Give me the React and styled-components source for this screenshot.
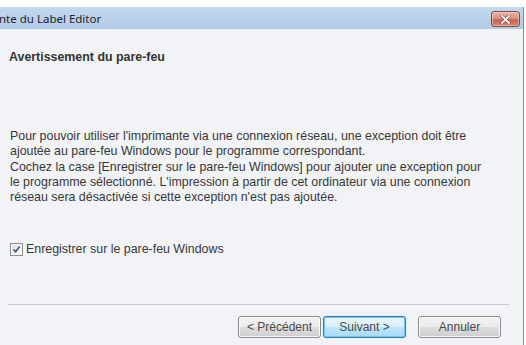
import React, { useState } from "react";
import styled, { createGlobalStyle } from "styled-components";

const GlobalStyle = createGlobalStyle`
  html, body {
    margin: 0;
    padding: 0;
    background: #ffffff;
  }
  * {
    box-sizing: border-box;
  }
`;

const Page = styled.div`
  width: 526px;
  height: 345px;
  padding-top: 7px;
  background: #ffffff;
  overflow: hidden;
`;

const Window = styled.div`
  width: 524px;
  height: 338px;
  display: flex;
  flex-direction: column;
  border-right: 1px solid #7f93ab;
`;

const TitleBar = styled.div`
  height: 22px;
  display: flex;
  align-items: center;
  justify-content: space-between;
  padding-right: 3px;
  background: linear-gradient(to bottom, #c4d8ee 0%, #b9d1ea 50%, #b3cbe7 100%);
`;

const TitleText = styled.span`
  font-family: "Noto Sans", "DejaVu Sans", sans-serif;
  font-size: 11.5px;
  color: #1c2430;
  margin-left: -1px;
  white-space: nowrap;
`;

const CloseButton = styled.div`
  width: 29px;
  height: 16px;
  margin-top: 2px;
  border: 1px solid #7a4a44;
  border-radius: 3px;
  display: flex;
  align-items: center;
  justify-content: center;
  background: linear-gradient(
    to bottom,
    #e8b3a8 0%,
    #db9585 45%,
    #c9634f 55%,
    #d68472 100%
  );
  box-shadow: inset 0 0 0 1px rgba(255, 215, 205, 0.5);
`;

const Content = styled.div`
  flex: 1;
  display: flex;
  flex-direction: column;
  background: #f1f3f6;
  padding: 21px 0 0 0;
  font-family: "Liberation Sans", Arial, sans-serif;
  font-size: 12.4px;
  color: #383838;
`;

const Heading = styled.div`
  font-weight: bold;
  line-height: 15px;
  margin-left: 9px;
  color: #333333;
`;

const Message = styled.p`
  margin: 64px 0 0 10px;
  line-height: 15.25px;
  white-space: nowrap;
`;

const CheckRow = styled.label`
  display: flex;
  align-items: center;
  gap: 3px;
  margin: 36px 0 0 10px;
  height: 16px;
  cursor: pointer;
`;

const Box = styled.span`
  width: 13px;
  height: 13px;
  border: 1px solid #8f8f8f;
  background: linear-gradient(to bottom right, #dcdcdc, #ffffff);
  display: flex;
  align-items: center;
  justify-content: center;
  box-shadow: inset 0 0 0 1px #f4f4f4;
`;

const Separator = styled.div`
  height: 1px;
  margin: 47px 14px 0 8px;
  background: #c7cbd1;
`;

const ButtonBar = styled.div`
  display: flex;
  justify-content: flex-end;
  margin-top: 11px;
  padding-right: 22px;
`;

const Button = styled.button`
  width: 83px;
  height: 22px;
  margin-left: ${(props) => props.gap || 0}px;
  padding: 0;
  border: 1px solid ${(props) => (props.focused ? "#3c7fb1" : "#8a8a8a")};
  border-radius: 3px;
  font-family: "Liberation Sans", Arial, sans-serif;
  font-size: 12px;
  color: #4a4a4a;
  background: ${(props) =>
    props.focused
      ? "linear-gradient(to bottom, #eaf6fd 0%, #d9f0fc 50%, #bee6fd 51%, #a7d9f5 100%)"
      : "linear-gradient(to bottom, #f2f2f2 0%, #ebebeb 50%, #dddddd 51%, #cfcfcf 100%)"};
  box-shadow: ${(props) =>
    props.focused
      ? "inset 0 0 0 1px #6fc4f0, 0 0 1px #5aa7d8"
      : "inset 0 0 0 1px #fcfcfc"};
`;

const CheckMark = () => (
  <svg width="9" height="9" viewBox="0 0 9 9">
    <path
      d="M1.5 4.5 L3.6 6.8 L7.6 1.5"
      fill="none"
      stroke="#3c5a7e"
      strokeWidth="1.6"
    />
  </svg>
);

const CloseX = () => (
  <svg width="11" height="9" viewBox="0 0 11 9">
    <path
      d="M2 1 L9 8 M9 1 L2 8"
      stroke="#7a3a30"
      strokeWidth="3"
      strokeLinecap="square"
    />
    <path
      d="M2 1 L9 8 M9 1 L2 8"
      stroke="#ffffff"
      strokeWidth="1.8"
      strokeLinecap="square"
    />
  </svg>
);

export default function App() {
  const [checked, setChecked] = useState(true);

  return (
    <>
      <GlobalStyle />
      <Page>
        <Window>
          <TitleBar>
            <TitleText>nte du Label Editor</TitleText>
            <CloseButton>
              <CloseX />
            </CloseButton>
          </TitleBar>
          <Content>
            <Heading>Avertissement du pare-feu</Heading>
            <Message>
              Pour pouvoir utiliser l'imprimante via une connexion réseau, une exception doit être
              <br />
              ajoutée au pare-feu Windows pour le programme correspondant.
              <br />
              Cochez la case [Enregistrer sur le pare-feu Windows] pour ajouter une exception pour
              <br />
              le programme sélectionné. L'impression à partir de cet ordinateur via une connexion
              <br />
              réseau sera désactivée si cette exception n'est pas ajoutée.
            </Message>
            <CheckRow onClick={() => setChecked(!checked)}>
              <Box>{checked && <CheckMark />}</Box>
              Enregistrer sur le pare-feu Windows
            </CheckRow>
            <Separator />
            <ButtonBar>
              <Button>&lt; Précédent</Button>
              <Button gap={2} focused>
                Suivant &gt;
              </Button>
              <Button gap={12}>Annuler</Button>
            </ButtonBar>
          </Content>
        </Window>
      </Page>
    </>
  );
}
